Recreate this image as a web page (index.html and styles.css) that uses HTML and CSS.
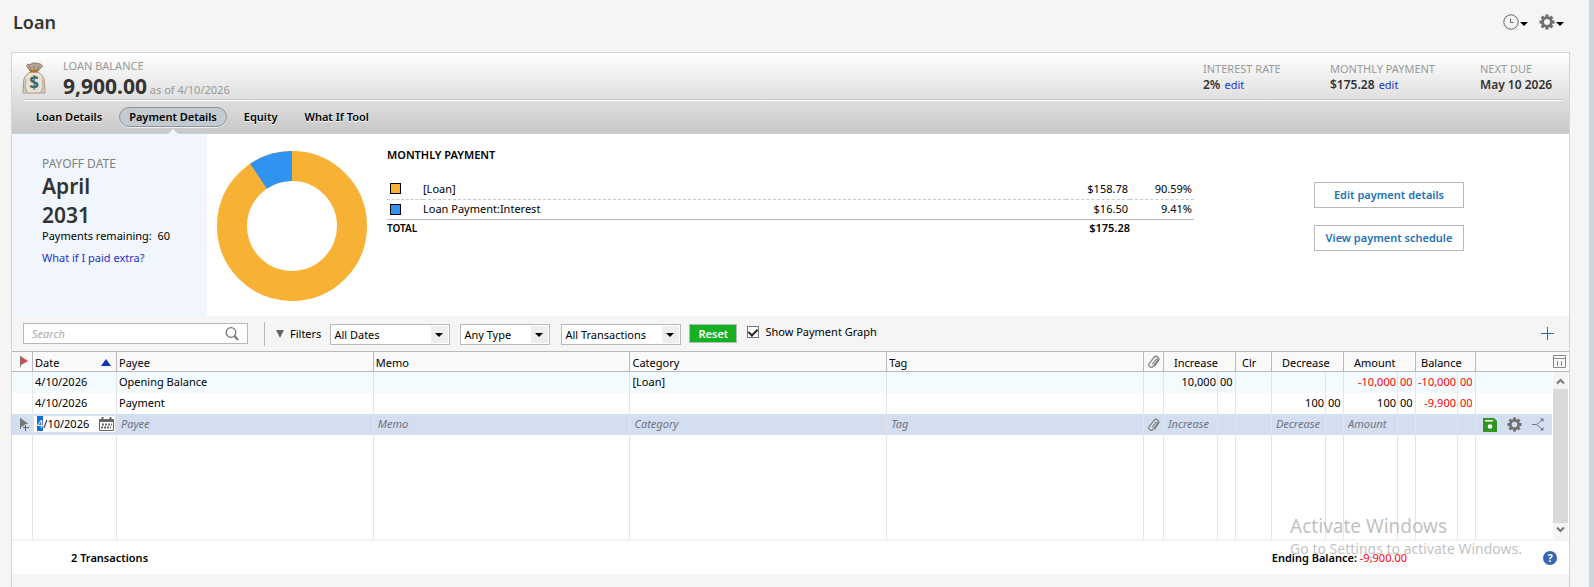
FILE: index.html
```html
<!DOCTYPE html>
<html lang="en">
<head>
    <meta charset="UTF-8">
    <meta name="viewport" content="width=device-width, initial-scale=1.0">
    <title>Loan</title>
    <link rel="stylesheet" href="styles.css">
</head>
<body>
    <svg class="sprite" aria-hidden="true">
        <symbol id="gear" viewBox="0 0 16 16">
            <g fill="currentColor">
                <path fill-rule="evenodd" d="M8 2.2a5.8 5.8 0 1 0 0 11.6a5.8 5.8 0 0 0 0-11.6zM8 5a3 3 0 1 1 0 6a3 3 0 0 1 0-6z"/>
                <rect x="6.4" y="0.5" width="3.2" height="3"/>
                <rect x="6.4" y="0.5" width="3.2" height="3" transform="rotate(45 8 8)"/>
                <rect x="6.4" y="0.5" width="3.2" height="3" transform="rotate(90 8 8)"/>
                <rect x="6.4" y="0.5" width="3.2" height="3" transform="rotate(135 8 8)"/>
                <rect x="6.4" y="0.5" width="3.2" height="3" transform="rotate(180 8 8)"/>
                <rect x="6.4" y="0.5" width="3.2" height="3" transform="rotate(225 8 8)"/>
                <rect x="6.4" y="0.5" width="3.2" height="3" transform="rotate(270 8 8)"/>
                <rect x="6.4" y="0.5" width="3.2" height="3" transform="rotate(315 8 8)"/>
            </g>
        </symbol>
        <symbol id="clip" viewBox="0 0 12 14">
            <path d="M4 9.500L8 4.500c.8-1 2.200 0 1.400 1.100L5 11.500C3.300 13.600-.4 11 1.200 8.700L6 2.300c2-2.500 6.300.4 4.500 3.200L6.500 11.500" fill="none" stroke="currentColor" stroke-width="1.200"/>
        </symbol>
    </svg>

    <header class="page-header">
        <h1>Loan</h1>
        <div class="page-actions">
            <button class="icon-btn" aria-label="History">
                <svg width="16" height="16" viewBox="0 0 16 16" fill="none" stroke="#666"><circle cx="8" cy="8" r="7.2"/><path d="M7.5 4.5v4h3"/></svg>
                <span class="caret"></span>
            </button>
            <button class="icon-btn" aria-label="Settings">
                <svg width="16" height="16"><use href="#gear"/></svg>
                <span class="caret"></span>
            </button>
        </div>
    </header>

    <main class="panel">
        <section class="summary">
            <div class="balance-bar">
                <svg class="money-bag" width="24" height="32" viewBox="0 0 24 32">
                    <path d="M8 9L4.5 3.5Q5 1.5 8 2.5Q12-.5 15 1.5Q19 1 20.5 4L16 9z" fill="#b9a692" stroke="#8d7a68"/>
                    <path d="M9 8L7.5 4M12 8V3.5M15 8l2-4" stroke="#8a7664" fill="none"/>
                    <path d="M8 10Q1.5 14 1.5 20.500L1 31h22l-.5-10.500Q22.500 14 16 10z" fill="#e9e2d6" stroke="#a8937d"/>
                    <path d="M2.500 19Q2 28 3 30h3Q2.500 26 5 15zM21.500 19Q22 28 21 30h-3Q21.500 26 19 15z" fill="#c5b5a1"/>
                    <rect x="8" y="8" width="8" height="2.500" fill="#b9741f"/>
                    <text x="12" y="26.500" text-anchor="middle" class="bag-sign">$</text>
                </svg>
                <div class="balance">
                    <div class="label">LOAN BALANCE</div>
                    <div><strong class="amount">9,900.00</strong> <span class="as-of">as of 4/10/2026</span></div>
                </div>
                <dl class="facts">
                    <div class="fact-rate"><dt>INTEREST RATE</dt><dd>2% <a href="#">edit</a></dd></div>
                    <div class="fact-payment"><dt>MONTHLY PAYMENT</dt><dd>$175.28 <a href="#">edit</a></dd></div>
                    <div class="fact-due"><dt>NEXT DUE</dt><dd>May 10 2026</dd></div>
                </dl>
            </div>
            <nav class="tabs">
                <button>Loan Details</button>
                <button class="active">Payment Details</button>
                <button>Equity</button>
                <button>What If Tool</button>
            </nav>
        </section>

        <section class="details">
            <aside class="payoff">
                <div class="label">PAYOFF DATE</div>
                <div class="payoff-date">April<br>2031</div>
                <div>Payments remaining:&nbsp; 60</div>
                <a href="#">What if I paid extra?</a>
            </aside>
            <!-- interest is 9.41% of the ring -->
            <svg class="donut" width="150" height="150" viewBox="0 0 150 150" fill="none" stroke-width="30">
                <circle cx="75" cy="75" r="60" stroke="#f7b134"/>
                <circle cx="75" cy="75" r="60" stroke="#2f93f0" pathLength="100" stroke-dasharray="9.41 90.59" transform="rotate(-123.876 75 75)"/>
            </svg>
            <div class="breakdown">
                <h2>MONTHLY PAYMENT</h2>
                <table>
                    <tbody>
                        <tr><td class="key"><span class="swatch principal"></span></td><td>[Loan]</td><td class="money">$158.78</td><td class="percent">90.59%</td></tr>
                        <tr><td class="key"><span class="swatch interest"></span></td><td>Loan Payment:Interest</td><td class="money">$16.50</td><td class="percent">9.41%</td></tr>
                    </tbody>
                    <tfoot>
                        <tr><th colspan="2">TOTAL</th><td class="money">$175.28</td><td></td></tr>
                    </tfoot>
                </table>
            </div>
            <div class="detail-buttons">
                <button>Edit payment details</button>
                <button>View payment schedule</button>
            </div>
        </section>

        <section class="toolbar">
            <div class="search">
                <input type="text" placeholder="Search" aria-label="Search">
                <svg width="14" height="14" viewBox="0 0 14 14" fill="none" stroke="#777"><circle cx="6" cy="5.5" r="4.8" stroke-width="1.3"/><path d="M9.5 9l3.5 4" stroke-width="2"/></svg>
            </div>
            <span class="divider"></span>
            <button class="filters"><span class="filter-mark"></span>Filters</button>
            <span class="select dates"><select aria-label="Dates"><option>All Dates</option></select></span>
            <span class="select type"><select aria-label="Type"><option>Any Type</option></select></span>
            <span class="select transactions"><select aria-label="Transactions"><option>All Transactions</option></select></span>
            <button class="reset">Reset</button>
            <label class="graph-toggle"><input type="checkbox" checked>Show Payment Graph</label>
            <button class="icon-btn add" aria-label="Add">
                <svg width="13" height="13" viewBox="0 0 13 13"><path d="M0 6.5h13M6.5 0v13" stroke="#1f6fb8"/></svg>
            </button>
        </section>

        <table class="register">
            <colgroup>
                <col class="w-flag"><col class="w-date"><col><col><col><col><col class="w-clip">
                <col class="w-money"><col class="w-cents"><col class="w-clr">
                <col class="w-money"><col class="w-cents">
                <col class="w-money"><col class="w-cents">
                <col class="w-balance"><col class="w-cents">
                <col class="w-actions"><col class="w-scroll">
            </colgroup>
            <thead>
                <tr>
                    <th class="icon"><svg width="8" height="11" viewBox="0 0 8 11"><path d="M1 .5L8 5L1 9z" fill="#d9474c"/><path d="M.5 0v11" stroke="#777"/></svg></th>
                    <th><span class="sorted">Date <i class="sort-up"></i></span></th>
                    <th>Payee</th>
                    <th>Memo</th>
                    <th>Category</th>
                    <th>Tag</th>
                    <th class="icon"><svg width="12" height="14"><use href="#clip"/></svg></th>
                    <th colspan="2" class="wide">Increase</th>
                    <th class="clr">Clr</th>
                    <th colspan="2" class="wide">Decrease</th>
                    <th colspan="2" class="wide">Amount</th>
                    <th colspan="2" class="balance-head">Balance</th>
                    <th colspan="2" class="columns">
                        <button class="icon-btn" aria-label="Columns"><svg width="13" height="13" viewBox="0 0 13 13" fill="none" stroke="#888"><path d="M.5.5h12v12h-12zM.5 3.5h12M4.5 6v5M8.5 6v5"/></svg></button>
                    </th>
                </tr>
            </thead>
            <tbody>
                <tr class="odd">
                    <td></td><td>4/10/2026</td><td>Opening Balance</td><td></td><td>[Loan]</td><td></td><td></td>
                    <td class="num">10,000</td><td class="cents">00</td><td></td>
                    <td></td><td></td>
                    <td class="num neg">-10,000</td><td class="cents neg">00</td>
                    <td class="num neg">-10,000</td><td class="cents neg">00</td>
                    <td class="actions"></td>
                    <td class="scroll" rowspan="4">
                        <div class="scrollbar">
                            <svg width="9" height="7" viewBox="0 0 9 7"><path d="M1 5.5L4.5 2L8 5.5" fill="none" stroke="#777" stroke-width="2"/></svg>
                            <span class="thumb"></span>
                            <svg width="9" height="7" viewBox="0 0 9 7"><path d="M1 1.5L4.5 5L8 1.5" fill="none" stroke="#777" stroke-width="2"/></svg>
                        </div>
                    </td>
                </tr>
                <tr>
                    <td></td><td>4/10/2026</td><td>Payment</td><td></td><td></td><td></td><td></td>
                    <td></td><td></td><td></td>
                    <td class="num">100</td><td class="cents">00</td>
                    <td class="num">100</td><td class="cents">00</td>
                    <td class="num neg">-9,900</td><td class="cents neg">00</td>
                    <td class="actions"></td>
                </tr>
                <tr class="entry">
                    <td class="icon"><svg width="9" height="13" viewBox="0 0 9 13"><path d="M.5 0v11" stroke="#777"/><path d="M1 .5L8 5.500L1 9z" fill="#777"/><path d="M3 9.500h6M6 6.500v6" stroke="#d3def0" stroke-width="3"/><path d="M3 9.500h6M5.500 7v6" stroke="#666"/></svg></td>
                    <td class="date-cell">
                        <div class="date-edit">
                            <div class="date-value" contenteditable="true" role="textbox" aria-label="Date"><mark>4</mark>/10/2026</div>
                            <button class="calendar" aria-label="Pick date">
                                <svg width="15" height="14" viewBox="0 0 15 14"><path d="M.5 2.5h14v11H.5z" fill="#fff" stroke="#666"/><path d="M0 2h15v3H0z" fill="#666"/><path d="M3.5 0v3M11.5 0v3" stroke="#666" stroke-width="2"/><path d="M3 7.500h10M2 10.500h10" stroke="#666" stroke-width="2" stroke-dasharray="2 1"/></svg>
                            </button>
                        </div>
                    </td>
                    <td><input type="text" placeholder="Payee" aria-label="Payee"></td>
                    <td><input type="text" placeholder="Memo" aria-label="Memo"></td>
                    <td><input type="text" placeholder="Category" aria-label="Category"></td>
                    <td><input type="text" placeholder="Tag" aria-label="Tag"></td>
                    <td class="icon"><svg width="12" height="14"><use href="#clip"/></svg></td>
                    <td class="spill"><input type="text" placeholder="Increase" aria-label="Increase"></td><td></td><td></td>
                    <td class="spill"><input type="text" placeholder="Decrease" aria-label="Decrease"></td><td></td>
                    <td class="spill"><input type="text" placeholder="Amount" aria-label="Amount"></td><td></td>
                    <td></td><td></td>
                    <td class="actions">
                        <div class="row-actions">
                            <button class="icon-btn" aria-label="Save"><svg width="14" height="14" viewBox="0 0 14 14"><path d="M0 0h11l3 3v11H0z" fill="#2f9420"/><path d="M2 2h8v1.5H2z" fill="#fff"/><circle cx="7" cy="8.5" r="2.3" fill="#fff"/></svg></button>
                            <button class="icon-btn" aria-label="Actions"><svg width="15" height="15"><use href="#gear"/></svg></button>
                            <button class="icon-btn" aria-label="Split"><svg width="12" height="13" viewBox="0 0 12 13" fill="none" stroke="#777"><path d="M0 6.5h4.5L10 2M4.500 6.500L10 11"/><path d="M8 .5h3.500V4zM8 12.500h3.500V9z" fill="#777" stroke="none"/></svg></button>
                        </div>
                    </td>
                </tr>
                <tr class="blank">
                    <td></td><td></td><td></td><td></td><td></td><td></td><td></td><td></td><td></td>
                    <td></td><td></td><td></td><td></td><td></td><td></td><td></td><td class="actions"></td>
                </tr>
            </tbody>
        </table>

        <footer class="totals">
            <strong>2 Transactions</strong>
            <div class="ending"><strong>Ending Balance:</strong> <span class="neg">-9,900.00</span></div>
            <button class="help" aria-label="Help">?</button>
        </footer>
    </main>

    <div class="watermark">
        <div class="watermark-title">Activate Windows</div>
        <div>Go to Settings to activate Windows.</div>
    </div>
</body>
</html>
```
FILE: styles.css
```css
* {
    margin: 0;
    padding: 0;
    box-sizing: border-box;
}

body {
    font-family: "Noto Sans", "Open Sans", sans-serif;
    font-size: 11px;
    line-height: 16px;
    color: #000;
    background: #f5f5f5;
    min-height: 100vh;
    border-right: 5px solid #cbd6df;
    padding: 0 19px 0 11px;
    display: flex;
    flex-direction: column;
}

button, input, select {
    font: inherit;
    color: inherit;
    background: none;
    border: none;
}

button {
    cursor: pointer;
}

svg {
    display: block;
    flex: none;
}

a {
    color: #2233cc;
    text-decoration: none;
}

strong, th {
    font-weight: 600;
}

.sprite {
    position: absolute;
    width: 0;
    height: 0;
}

.neg {
    color: #ff0000;
}

/* page header */

.page-header {
    display: flex;
    align-items: center;
    justify-content: space-between;
    height: 52px;
    padding: 0 6px 8px 2px;
}

h1 {
    font-size: 18px;
    font-weight: 600;
    line-height: 24px;
    color: #333;
}

.page-actions {
    display: flex;
    gap: 11px;
}

.icon-btn {
    display: flex;
    align-items: center;
    color: #707070;
}

.caret {
    border: 4px solid transparent;
    border-top-color: #000;
    border-bottom: none;
    margin: 4px 0 0 1px;
}

.panel {
    flex: 1;
    border: 1px solid #d4d4d8;
    border-bottom: none;
}

/* balance and tabs */

.summary {
    background: linear-gradient(#fff, #c8c8c8);
    border-bottom: 1px solid #c9d3da;
}

.balance-bar {
    display: flex;
    height: 47px;
    margin: 0 7px 0 12px;
    border-bottom: 1px solid #c4c4c4;
    box-shadow: 0 1px #fff;
}

.money-bag {
    margin: 9px 0 0 -2px;
}

.bag-sign {
    font-size: 17px;
    font-weight: 700;
    fill: #41695c;
}

.label, .facts dt {
    font-size: 11px;
    font-weight: 400;
    line-height: 16px;
    color: #999;
}

.balance {
    padding: 5px 0 0 17px;
}

.amount {
    font-size: 21px;
    font-weight: 700;
    line-height: 24px;
    color: #333;
}

.as-of {
    color: #999;
}

.facts {
    display: flex;
    margin-left: auto;
    padding: 8px 4px 0 0;
}

.fact-rate {
    width: 127px;
}

.fact-payment {
    width: 150px;
}

.fact-due {
    width: 78px;
}

.facts dd {
    font-size: 12px;
    font-weight: 600;
    line-height: 15px;
    color: #333;
    white-space: nowrap;
}

.facts a {
    font-size: 11px;
    font-weight: 400;
    margin-left: 1px;
}

.tabs {
    display: flex;
    gap: 7px;
    padding: 6px 14px;
    margin-top: 1px;
}

.tabs button {
    position: relative;
    height: 20px;
    padding: 0 9px;
    border: 1px solid transparent;
    border-radius: 10px;
    font-weight: 600;
    line-height: 18px;
    text-shadow: 0 1px #fff;
}

.tabs .active {
    background: #c3cad0;
    border-color: #8d949a;
    box-shadow: 0 1px #eee;
    text-shadow: none;
}

.tabs .active::after {
    content: "";
    position: absolute;
    left: 50%;
    top: 21px;
    margin-left: -5px;
    border: 5px solid transparent;
    border-top: none;
    border-bottom-color: #f0f6fb;
}

/* payment details */

.details {
    display: flex;
    height: 182px;
    background: #fff;
}

.payoff {
    width: 195px;
    padding: 22px 0 0 30px;
    background: #f0f6fb;
    line-height: 12px;
}

.payoff .label {
    font-size: 12px;
    color: #808080;
}

.payoff-date {
    font-size: 21px;
    font-weight: 600;
    line-height: 29px;
    color: #333;
}

.payoff a {
    display: block;
    margin-top: 10px;
}

.donut {
    margin: 17px 20px 0 10px;
}

.breakdown {
    flex: 1;
    padding-top: 13px;
}

h2 {
    font-size: 11px;
    font-weight: 600;
    line-height: 16px;
}

.breakdown table {
    width: 100%;
    margin-top: 16px;
    border-collapse: collapse;
}

.breakdown td {
    height: 20px;
}

.breakdown tbody tr:first-child td {
    border-bottom: 1px dashed #c8c8c8;
}

.breakdown .key {
    width: 36px;
    padding-left: 3px;
}

.breakdown .money, .breakdown .percent {
    width: 64px;
    text-align: right;
    padding-right: 2px;
}

.breakdown tfoot td, .breakdown tfoot th {
    height: 17px;
    border-top: 1px solid #b8b8b8;
    text-align: left;
    font-size: 10px;
}

.breakdown tfoot .money {
    font-size: 11px;
    font-weight: 600;
    text-align: right;
    padding-right: 0;
}

.swatch {
    display: block;
    width: 11px;
    height: 11px;
    border: 1px solid #000;
}

.principal {
    background: #f7b134;
}

.interest {
    background: #2f93f0;
}

.detail-buttons {
    display: flex;
    flex-direction: column;
    gap: 17px;
    padding: 48px 105px 0 120px;
}

.detail-buttons button {
    width: 150px;
    height: 26px;
    border: 1px solid #b9b9b9;
    font-weight: 600;
    color: #2271b9;
}

/* toolbar */

.toolbar {
    display: flex;
    align-items: center;
    height: 35px;
    padding: 0 15px 0 11px;
}

.search {
    display: flex;
    align-items: center;
    width: 225px;
    height: 21px;
    padding: 0 8px;
    border: 1px solid #b9b9b9;
    background: #fff;
}

.search input {
    flex: 1;
    min-width: 0;
    outline: none;
}

::placeholder {
    font-style: italic;
    color: #6f7480;
    opacity: 1;
}

.search ::placeholder {
    color: #aaa;
}

.divider {
    width: 1px;
    height: 24px;
    margin: 0 11px 0 16px;
    background: #b9b9b9;
}

.filters {
    display: flex;
    align-items: center;
    gap: 6px;
    margin-right: 9px;
}

.filter-mark {
    border: 4px solid transparent;
    border-top: 8px solid #666;
    border-bottom: none;
}

.select {
    position: relative;
    height: 21px;
    margin-top: 2px;
    border: 1px solid #b9b9b9;
    background: #fff;
}

.select select {
    width: 100%;
    height: 19px;
    padding-left: 3px;
    appearance: none;
    outline: none;
}

.select::before {
    content: "";
    position: absolute;
    right: 1px;
    top: 1px;
    width: 17px;
    height: 17px;
    background: #eee;
    pointer-events: none;
}

.select::after {
    content: "";
    position: absolute;
    right: 6px;
    top: 8px;
    border: 4px solid transparent;
    border-top-color: #000;
    border-bottom: none;
    pointer-events: none;
}

.dates {
    width: 120px;
    margin-right: 10px;
}

.type {
    width: 90px;
    margin-right: 11px;
}

.transactions {
    width: 120px;
    margin-right: 8px;
}

.reset {
    width: 48px;
    height: 19px;
    border: 1px solid #b9b9b9;
    background: #14b024;
    color: #fff;
    font-weight: 600;
    line-height: 17px;
}

.graph-toggle {
    display: flex;
    align-items: center;
    gap: 6px;
    margin: 0 auto 3px 10px;
}

.graph-toggle input {
    appearance: none;
    display: flex;
    justify-content: center;
    width: 12px;
    height: 12px;
    border: 1px solid #777;
    background: #fff;
}

.graph-toggle input:checked::after {
    content: "";
    width: 4px;
    height: 7px;
    border: solid #222;
    border-width: 0 2px 2px 0;
    transform: rotate(45deg);
}

/* register */

.register {
    width: 100%;
    table-layout: fixed;
    border-spacing: 0;
    background: #fff;
}

.w-flag { width: 21px; }
.w-date { width: 84px; }
.w-clip { width: 20px; }
.w-money { width: 54px; }
.w-cents { width: 18px; }
.w-clr { width: 36px; }
.w-balance { width: 42px; }
.w-actions { width: 76px; }
.w-scroll { width: 17px; }

.register th {
    height: 21px;
    padding: 2px 2px 0;
    background: #f9f9f9;
    border: solid #b9b9b9;
    border-width: 1px 1px 1px 0;
    font-weight: 400;
    line-height: 16px;
    text-align: left;
}

.register td {
    height: 21px;
    padding: 0 2px 2px;
    border-right: 1px solid #e4e4e7;
    white-space: nowrap;
}

.register .icon {
    padding: 0 0 0 4px;
    color: #808080;
}

.register .icon:first-child {
    padding-left: 8px;
}

.register .wide {
    padding-left: 10px;
}

.register .clr {
    padding-left: 6px;
}

.register .balance-head {
    padding-left: 5px;
}

.register .columns {
    padding: 0 3px 0 77px;
    border-right: none;
}

.sorted {
    display: flex;
    align-items: center;
    justify-content: space-between;
    padding-right: 3px;
}

.sort-up {
    border: 5px solid transparent;
    border-top: none;
    border-bottom: 7px solid #1133bb;
}

.register .num {
    text-align: right;
    padding-left: 0;
    padding-right: 1px;
}

.register .cents {
    padding-right: 0;
}

.register .actions, .register .scroll {
    border-right: none;
}

.odd td:not(.scroll) {
    background: #f4fbff;
}

.entry td {
    background: #d3def0;
}

.entry input {
    display: block;
    width: 100%;
    padding-left: 2px;
    outline: none;
}

.entry .spill {
    padding-right: 0;
}

.register .date-cell {
    padding-left: 1px;
    padding-right: 1px;
}

.date-edit {
    display: flex;
    justify-content: space-between;
}

.date-value {
    flex: 1;
    height: 16px;
    padding-left: 3px;
    background: #fff;
}

mark {
    background: #1470d6;
    color: #fff;
}

.calendar {
    display: flex;
    align-items: center;
    justify-content: center;
    width: 17px;
    height: 16px;
    background: #fff;
}

.register .entry .actions {
    padding-bottom: 0;
}

.row-actions {
    display: flex;
    align-items: center;
    justify-content: space-between;
    padding: 0 6px 0 5px;
}

.register .blank td {
    height: 104px;
}

.register .scroll {
    height: 167px;
    padding: 0 1px;
}

.scrollbar {
    display: flex;
    flex-direction: column;
    align-items: center;
    justify-content: space-between;
    height: 167px;
    padding: 6px 0;
    background: #f4f4f4;
}

.thumb {
    width: 15px;
    height: 134px;
    background: #d9d9d9;
}

/* totals */

.totals {
    display: flex;
    align-items: center;
    height: 35px;
    padding: 0 12px 0 59px;
    border-top: 2px solid #f4f4f4;
    background: #fff;
}

.ending {
    margin: 0 136px 0 auto;
}

.help {
    width: 14px;
    height: 14px;
    border-radius: 50%;
    background: #3567b1;
    color: #fff;
    font-weight: 700;
    line-height: 14px;
}

.watermark {
    position: absolute;
    right: 72px;
    bottom: 28px;
    font-size: 14px;
    line-height: 20px;
    color: rgba(140, 140, 140, 0.55);
    pointer-events: none;
}

.watermark-title {
    font-size: 19px;
    line-height: 26px;
}
```
